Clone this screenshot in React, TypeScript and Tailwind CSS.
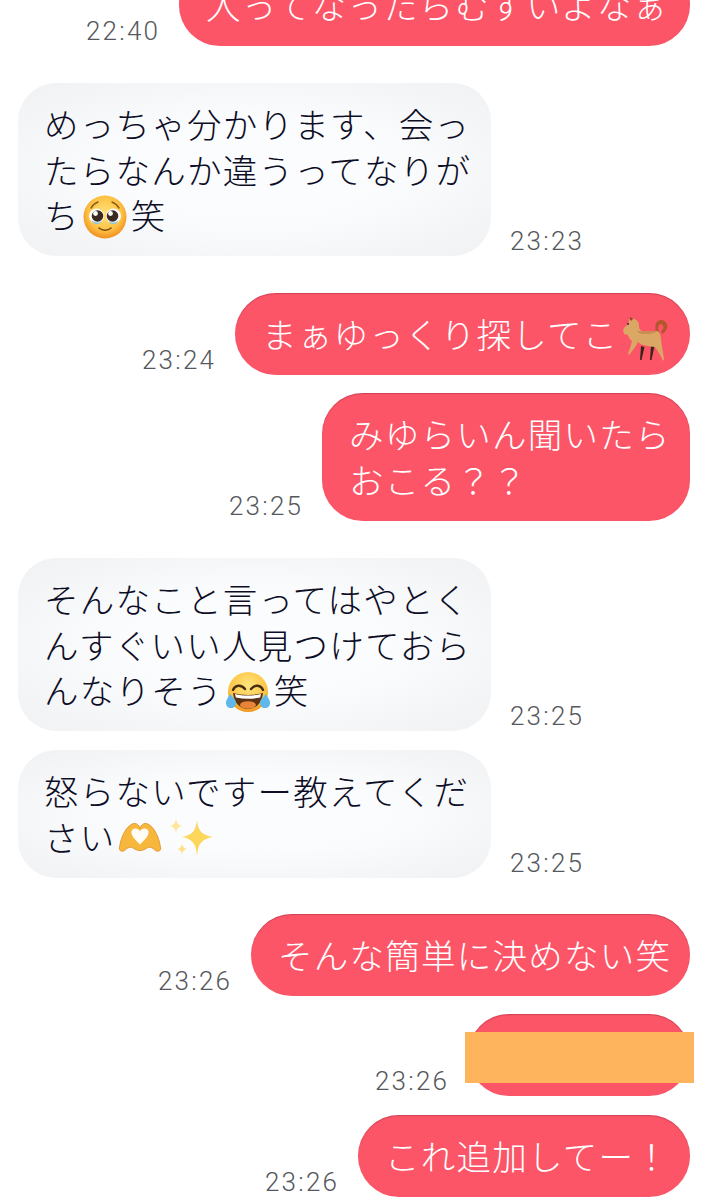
import React from "react";

const font = { fontFamily: '"Noto Sans CJK JP", "Noto Sans", sans-serif' };

function Pleading() {
  return (
    <svg viewBox="0 0 46 46" className="inline-block w-[46px] h-[46px] align-middle -my-3 ml-[2px] mr-[3px] -translate-y-[3px]">
      <defs>
        <radialGradient id="pf" cx="50%" cy="42%" r="60%">
          <stop offset="0%" stopColor="#ffe27a" />
          <stop offset="65%" stopColor="#fdc244" />
          <stop offset="100%" stopColor="#ef8a1c" />
        </radialGradient>
      </defs>
      <circle cx="23" cy="23" r="21.5" fill="url(#pf)" />
      <path d="M9 14c2-3 4-5 7-6M37 14c-2-3-4-5-7-6" stroke="#8a5a1a" strokeWidth="1.4" fill="none" strokeLinecap="round" />
      <circle cx="14.500" cy="22" r="7.500" fill="#fff" />
      <circle cx="31.500" cy="22" r="7.500" fill="#fff" />
      <circle cx="15.500" cy="22" r="5.800" fill="#3a2a22" />
      <circle cx="30.500" cy="22" r="5.800" fill="#3a2a22" />
      <circle cx="13.500" cy="19.500" r="2.400" fill="#fff" />
      <circle cx="28.500" cy="19.500" r="2.400" fill="#fff" />
      <path d="M9 25c2 4 9 5 11 1-1 5-9 6-11-1zM27 26c2 4 8 3 10-1-2 7-10 6-10 1z" fill="#7cc4e8" />
      <path d="M17 34c3 3 9 3 12 0" stroke="#7a4a12" strokeWidth="1.600" fill="none" strokeLinecap="round" />
    </svg>
  );
}

function Joy() {
  return (
    <svg viewBox="0 0 46 46" className="inline-block w-[46px] h-[46px] align-middle -my-3 ml-[2px] mr-[3px] -translate-y-[2px]">
      <defs>
        <radialGradient id="jf" cx="50%" cy="35%" r="65%">
          <stop offset="0%" stopColor="#ffe680" />
          <stop offset="70%" stopColor="#fcc545" />
          <stop offset="100%" stopColor="#f0951f" />
        </radialGradient>
      </defs>
      <circle cx="23" cy="22" r="20" fill="url(#jf)" />
      <path d="M8 20c2-5 8-6 12-1M26 19c4-5 10-4 12 1" stroke="#4a2c12" strokeWidth="2.400" fill="none" strokeLinecap="round" />
      <path d="M8 23c9 2.500 21 2.500 30 0-1 10-7 16-15 16S9 33 8 23z" fill="#5c3212" />
      <path d="M10 24c8 2 18 2 26 0l-.8 3.500c-8 1.600-16 1.600-24.400 0z" fill="#fff" />
      <ellipse cx="23" cy="35" rx="8" ry="3.800" fill="#e8843a" />
      <path d="M5 24c2 3 6 5 6 9 0 3-2 5-5 5s-5-2-5-5c0-4 3-6 4-9z" fill="#5fb8ec" />
      <path d="M41 24c-2 3-6 5-6 9 0 3 2 5 5 5s5-2 5-5c0-4-3-6-4-9z" fill="#5fb8ec" />
    </svg>
  );
}

function HeartHands() {
  return (
    <svg viewBox="0 0 46 34" className="inline-block w-[46px] h-[32px] align-middle -my-2 ml-[1px] -translate-y-[4px]">
      <path d="M1 30C2 18 8 6 15 3c4-1.500 7 1 8 5 1-4 4-6.500 8-5 7 3 13 15 14 27-.3 2-4 3-6 1-3-3-6-4-9-2-2 1.500-5 2.500-7 2.500s-5-1-7-2.500c-3-2-6-1-9 2-2 2-5.700 1-6-1z" fill="#f6b73c" stroke="#d98e22" strokeWidth="0.800" />
      <path d="M23 11c-2-4-8-4-9 0-1 5 5 10 9 14 4-4 10-9 9-14-1-4-7-4-9 0z" fill="#fffdf6" />
    </svg>
  );
}

function Sparkles() {
  return (
    <svg viewBox="0 0 46 42" className="inline-block w-[46px] h-[42px] align-middle -my-2 ml-[6px] -translate-y-[3px]">
      <path d="M28 3c1 11 5 15 16 17-11 2-15 6-16 19-1-13-5-17-15-19 10-2 14-6 15-17z" fill="#fdd65c" />
      <path d="M7 1c.5 5 2 7 6 8-4 1-5.500 3-6 8-.5-5-2-7-6-8 4-1 5.500-3 6-8z" fill="#fde79a" />
      <path d="M13 26c.5 4 2 5.500 5 6-3 .8-4.500 2-5 6-.5-4-2-5.200-5-6 3-.5 4.500-2 5-6z" fill="#fde08a" />
    </svg>
  );
}

function Dog() {
  return (
    <svg viewBox="0 0 47 47" className="inline-block w-[47px] h-[47px] align-middle -my-3 ml-[3px] -mr-[6px]">
      <path d="M35 17c-1-5-1-9 2-11 3-2 7-1 9 3 1 4-1 8-5 10l-1-3c2-1 3-3 2-5-1-2-3-2-4-1-1 2-1 5 0 8z" fill="#b4562c" />
      <path d="M20 31l-1 14h1.500l3-13zM30 30l-1 15h1.500l3-14z" fill="#3c2418" />
      <path d="M8 3l2-1 2 2c3 0 6 2 6 7 0 3 1 4 3 5h15c3 1 4 5 4 9 1 6 2 13 3 19l-1 2c-2-5-5-10-8-14-3 0-7-1-11-2-2 0-5-2-6-3-2 4-5 8-9 13l-1-1c1-4 3-8 4-13-3-2-3-4-4-6l-4-1c-1-3-1-4 0-6 1-1 3-3 5-5z" fill="#dba765" />
      <path d="M8 3l2-1 2 2-2 2z" fill="#a8402a" />
      <path d="M16 16h20c-2 3-12 4-18 2z" fill="#b8763c" opacity="0.5" />
      <circle cx="7" cy="9" r="0.900" fill="#222" />
    </svg>
  );
}

function Bubble({ side, w, children }: { side: "l" | "r"; w: string; children: React.ReactNode }) {
  if (side === "r") {
    return (
      <div className={`${w} rounded-[41px] bg-[#fc5568] px-[27px] py-[18.25px] text-[34.5px] leading-[45.5px] font-light tracking-[1.25px] text-white whitespace-nowrap shadow-[inset_0_1px_1px_rgba(120,30,50,0.35)]`}>
        {children}
      </div>
    );
  }
  return (
    <div className={`${w} rounded-[38px] bg-[radial-gradient(ellipse_at_center,#fbfcfd_40%,#f1f2f4_95%)] px-[26px] py-[18.25px] text-[34.5px] leading-[45.5px] font-light tracking-[1.25px] text-[#0d0d26] whitespace-nowrap`}>
      {children}
    </div>
  );
}

function Time({ children }: { children: React.ReactNode }) {
  return (
    <div className="w-[74px] text-[26px] leading-[30px] font-light tracking-[2.2px] text-[#55585c] whitespace-nowrap" style={{ fontFamily: '"Roboto", "Noto Sans", sans-serif' }}>
      {children}
    </div>
  );
}

function Right({ time, w, mt, children }: { time: string; w: string; mt: string; children: React.ReactNode }) {
  return (
    <div className={`${mt} flex items-end justify-end gap-[19px] pr-[18px]`}>
      <Time>{time}</Time>
      <Bubble side="r" w={w}>{children}</Bubble>
    </div>
  );
}

function Left({ time, mt, children }: { time: string; mt: string; children: React.ReactNode }) {
  return (
    <div className={`${mt} flex items-end gap-[19px] pl-[18px]`}>
      <Bubble side="l" w="w-[473px]">{children}</Bubble>
      <Time>{time}</Time>
    </div>
  );
}

export default function App() {
  return (
    <div className="w-[708px] h-[1200px] overflow-hidden bg-white" style={font}>
      <Right time="22:40" w="w-[511px]" mt="-mt-[36px]">入ってなったらむずいよなぁ</Right>
      <Left time="23:23" mt="mt-[37px]">
        めっちゃ分かります、会っ<br />たらなんか違うってなりが<br />ち<Pleading />笑
      </Left>
      <Right time="23:24" w="w-[455px]" mt="mt-[37px]">まぁゆっくり探してこ<Dog /></Right>
      <Right time="23:25" w="w-[368px]" mt="mt-[18px]">
        みゆらいん聞いたら<br />おこる？？
      </Right>
      <Left time="23:25" mt="mt-[37.5px]">
        そんなこと言ってはやとく<br />んすぐいい人見つけておら<br />んなりそう<Joy />笑
      </Left>
      <Left time="23:25" mt="mt-[19px]">
        怒らないですー教えてくだ<br />さい<HeartHands /><Sparkles />
      </Left>
      <Right time="23:26" w="w-[439px]" mt="mt-[36.5px]">そんな簡単に決めない笑</Right>
      <div className="relative">
        <Right time="23:26" w="w-[222px]" mt="mt-[18px]">&nbsp;</Right>
        <div className="absolute left-[465px] top-[18px] w-[229px] h-[51px] bg-[#fdb45c]" />
      </div>
      <Right time="23:26" w="w-[332px]" mt="mt-[19px]">これ追加してー！</Right>
    </div>
  );
}
